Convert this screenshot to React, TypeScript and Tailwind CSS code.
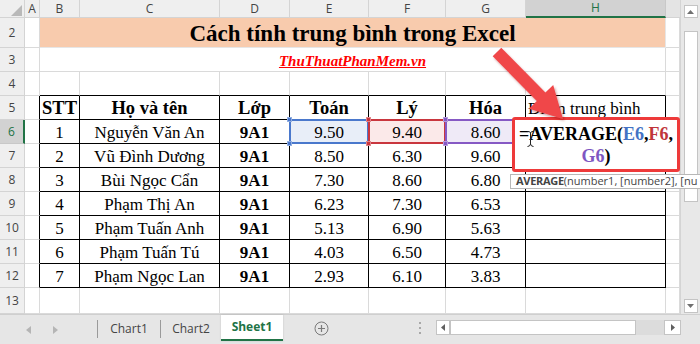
import React from "react";

const serif = "font-['Liberation_Serif',serif]";
const ui = "font-['Open_Sans','Noto_Sans',sans-serif]";

const G = "bg-white border-r border-b border-[#dadada]";
const AB = "bg-white border-r border-b border-r-black border-b-[#dadada]";
const TB = "bg-white border-r border-b border-r-[#dadada] border-b-black";
const CELL = `${serif} bg-white border-r border-b border-black flex items-end justify-center text-[17px] leading-[20px] text-black`;
const HEAD = `${serif} bg-white border-r border-b border-black flex items-end justify-center text-[18.5px] leading-[21px] font-bold text-black`;

const CH = `${ui} flex items-center justify-center bg-[#efefef] text-[12px] text-[#444] border-r border-b border-[#d4d4d4]`;
const CH_ACTIVE = `${ui} flex items-center justify-center bg-[#d2d2d2] text-[12px] text-[#217346] border-r border-r-[#c8c8c8] border-b-2 border-b-[#217346]`;

type Row = { stt: string; name: string; e: string; f: string; g: string };
const data: Row[] = [
  { stt: "1", name: "Nguyễn Văn An", e: "9.50", f: "9.40", g: "8.60" },
  { stt: "2", name: "Vũ Đình Dương", e: "8.50", f: "6.30", g: "9.60" },
  { stt: "3", name: "Bùi Ngọc Cẩn", e: "7.30", f: "8.60", g: "6.80" },
  { stt: "4", name: "Phạm Thị An", e: "6.23", f: "7.30", g: "6.53" },
  { stt: "5", name: "Phạm Tuấn Anh", e: "5.13", f: "6.90", g: "5.63" },
  { stt: "6", name: "Phạm Tuấn Tú", e: "4.03", f: "6.50", g: "4.73" },
  { stt: "7", name: "Phạm Ngọc Lan", e: "2.93", f: "6.10", g: "3.83" },
];

function RH({ n, active = false }: { n: number; active?: boolean }) {
  return (
    <div
      className={
        active
          ? `${ui} flex items-center justify-center bg-[#d2d2d2] text-[12px] text-[#217346] border-b border-b-[#c8c8c8] border-r-2 border-r-[#217346]`
          : `${ui} flex items-center justify-center bg-[#efefef] text-[12px] text-[#444] border-b border-r border-[#d4d4d4]`
      }
    >
      {n}
    </div>
  );
}

function Sel({ c }: { c: "blue" | "red" | "purple" }) {
  const box =
    c === "blue"
      ? "absolute left-[-1px] top-[-1px] right-[-1px] bottom-[-1px] border-2 border-[#4a78cc]"
      : c === "red"
      ? "absolute left-[-1px] top-[-1px] right-[-1px] bottom-[-1px] border-2 border-[#c9363e]"
      : "absolute left-[-1px] top-[-1px] right-[-1px] bottom-[-1px] border-2 border-[#8659c4]";
  const sq =
    c === "blue"
      ? "absolute w-[5px] h-[5px] bg-[#4a78cc] border border-white/40"
      : c === "red"
      ? "absolute w-[5px] h-[5px] bg-[#c9363e] border border-white/40"
      : "absolute w-[5px] h-[5px] bg-[#8659c4] border border-white/40";
  return (
    <>
      <div className={box} />
      <div className={`${sq} left-[-3px] top-[-3px]`} />
      <div className={`${sq} right-[-3px] top-[-3px]`} />
      <div className={`${sq} left-[-3px] bottom-[-3px]`} />
      <div className={`${sq} right-[-3px] bottom-[-3px]`} />
    </>
  );
}

export default function App() {
  return (
    <div className="relative w-[700px] h-[344px] overflow-hidden bg-white">
      <div className="flex h-[314px]">
        {/* sheet grid */}
        <div className="grid w-[680px] grid-cols-[25px_15px_40px_140px_70px_79px_77px_80px_140px_14px] grid-rows-[18px_30px_repeat(10,24px)_26px]">
          {/* column headers */}
          <div className="relative bg-[#efefef] border-r border-b border-[#d4d4d4]">
            <svg className="absolute left-0 top-0" width="25" height="18" viewBox="0 0 25 18">
              <polygon points="22,5 22,16 11,16" fill="#b9b9b9" />
            </svg>
          </div>
          <div className={CH}>A</div>
          <div className={CH}>B</div>
          <div className={CH}>C</div>
          <div className={CH}>D</div>
          <div className={CH}>E</div>
          <div className={CH}>F</div>
          <div className={CH}>G</div>
          <div className={CH_ACTIVE}>H</div>
          <div className="bg-[#e4e4e4] border-b border-[#d4d4d4]" />

          {/* row 2 */}
          <RH n={2} />
          <div className={G} />
          <div className={`col-span-7 bg-[#f8cbad] border-r border-b border-[#e6e6e6] flex items-end justify-center ${serif} font-bold text-[23px] leading-[26px] text-black`}>
            Cách tính trung bình trong Excel
          </div>
          <div className={G} />

          {/* row 3 */}
          <RH n={3} />
          <div className={G} />
          <div className={`col-span-7 bg-white border-b border-r border-[#dadada] flex items-end justify-center ${serif} font-bold italic underline text-[15px] leading-[20px] text-[#ff0000]`}>
            ThuThuatPhanMem.vn
          </div>
          <div className={G} />

          {/* row 4 */}
          <RH n={4} />
          <div className={G} />
          <div className={TB} />
          <div className={TB} />
          <div className={TB} />
          <div className={TB} />
          <div className={TB} />
          <div className={TB} />
          <div className={TB} />
          <div className={G} />

          {/* row 5 header */}
          <RH n={5} />
          <div className={AB} />
          <div className={HEAD}>STT</div>
          <div className={HEAD}>Họ và tên</div>
          <div className={HEAD}>Lớp</div>
          <div className={HEAD}>Toán</div>
          <div className={HEAD}>Lý</div>
          <div className={HEAD}>Hóa</div>
          <div className={`${serif} bg-white border-r border-b border-black flex items-end justify-start pl-[2px] text-[17px] leading-[20px] text-black whitespace-nowrap overflow-hidden`}>
            Điểm trung bình
          </div>
          <div className={G} />

          {/* data rows */}
          {data.map((r, i) => (
            <React.Fragment key={r.stt}>
              <RH n={6 + i} active={i === 0} />
              <div className={AB} />
              <div className={CELL}>{r.stt}</div>
              <div className={CELL}>{r.name}</div>
              <div className={`${CELL} font-bold`}>9A1</div>
              {i === 0 ? (
                <>
                  <div className={`relative ${serif} bg-[#e8eef8] border-r border-b border-black flex items-end justify-center text-[17px] leading-[20px] text-black`}>
                    {r.e}
                    <Sel c="blue" />
                  </div>
                  <div className={`relative ${serif} bg-[#fbe9e9] border-r border-b border-black flex items-end justify-center text-[17px] leading-[20px] text-black`}>
                    {r.f}
                    <Sel c="red" />
                  </div>
                  <div className={`relative ${serif} bg-[#efeaf7] border-r border-b border-black flex items-end justify-center text-[17px] leading-[20px] text-black`}>
                    {r.g}
                    <Sel c="purple" />
                  </div>
                </>
              ) : (
                <>
                  <div className={CELL}>{r.e}</div>
                  <div className={CELL}>{r.f}</div>
                  <div className={CELL}>{r.g}</div>
                </>
              )}
              <div className={CELL} />
              <div className={G} />
            </React.Fragment>
          ))}

          {/* row 13 */}
          <RH n={13} />
          <div className={G} />
          <div className={G} />
          <div className={G} />
          <div className={G} />
          <div className={G} />
          <div className={G} />
          <div className={G} />
          <div className={G} />
          <div className={G} />
        </div>

        {/* vertical scrollbar */}
        <div className="w-[20px] bg-[#e8e8e8] border-l border-[#d4d4d4] flex flex-col items-center pt-[5px] pb-[1px]">
          <div className="w-[14px] h-[13px] bg-white border border-[#c4c4c4] flex items-center justify-center">
            <svg width="7" height="4" viewBox="0 0 7 4">
              <polygon points="0,4 7,4 3.5,0" fill="#707070" />
            </svg>
          </div>
          <div className="mt-[13px] w-[14px] h-[171px] bg-white border border-[#c4c4c4]" />
          <div className="mt-auto w-[14px] h-[14px] bg-white border border-[#c4c4c4] flex items-center justify-center">
            <svg width="7" height="4" viewBox="0 0 7 4">
              <polygon points="0,0 7,0 3.5,4" fill="#707070" />
            </svg>
          </div>
        </div>
      </div>

      {/* sheet tabs bar */}
      <div className={`${ui} h-[30px] flex items-start bg-[#e6e6e6] border-t border-[#cfcfcf]`}>
        <div className="w-[97px] h-full flex items-center">
          <svg className="ml-[26px]" width="5" height="8" viewBox="0 0 5 8">
            <polygon points="5,0 5,8 0,4" fill="#b5b5b5" />
          </svg>
          <svg className="ml-[22px]" width="5" height="8" viewBox="0 0 5 8">
            <polygon points="0,0 0,8 5,4" fill="#b5b5b5" />
          </svg>
        </div>
        <div className="mt-[5px] w-px h-[18px] bg-[#9a9a9a]" />
        <div className="w-[62px] h-[26px] mt-[1px] flex items-center justify-center text-[12px] text-[#444]">Chart1</div>
        <div className="mt-[5px] w-px h-[18px] bg-[#9a9a9a]" />
        <div className="w-[60px] h-[26px] mt-[1px] flex items-center justify-center text-[12px] text-[#444]">Chart2</div>
        <div className="w-[62px] h-[26px] bg-white border-b-2 border-[#217346] flex items-center justify-center text-[12px] font-bold text-[#217346] shadow-[0_0_2px_rgba(0,0,0,0.15)]">
          Sheet1
        </div>
        <div className="ml-[31px] h-[26px] flex items-center">
          <svg width="15" height="15" viewBox="0 0 15 15">
            <circle cx="7.5" cy="7.5" r="6.5" fill="none" stroke="#7a7a7a" strokeWidth="1" />
            <path d="M7.5 4 V11 M4 7.5 H11" stroke="#7a7a7a" strokeWidth="1.2" />
          </svg>
        </div>
        <div className="ml-[88px] h-[26px] flex items-center">
          <svg width="6" height="12" viewBox="0 0 6 12">
            <rect x="2" y="0" width="2" height="2" fill="#a8a8a8" />
            <rect x="2" y="5" width="2" height="2" fill="#a8a8a8" />
            <rect x="2" y="10" width="2" height="2" fill="#a8a8a8" />
          </svg>
        </div>
        <div className="ml-[13px] mt-[5px] flex h-[15px]">
          <div className="w-[14px] h-[15px] bg-white border border-[#c4c4c4] flex items-center justify-center">
            <svg width="4" height="7" viewBox="0 0 4 7">
              <polygon points="4,0 4,7 0,3.5" fill="#606060" />
            </svg>
          </div>
          <div className="w-[186px] h-[15px] bg-white border border-[#c4c4c4]" />
          <div className="w-[28px] h-[15px] bg-[#dcdcdc]" />
          <div className="w-[17px] h-[15px] bg-white border border-[#c4c4c4] flex items-center justify-center">
            <svg width="4" height="7" viewBox="0 0 4 7">
              <polygon points="0,0 0,7 4,3.5" fill="#606060" />
            </svg>
          </div>
        </div>
      </div>

      {/* formula edit box (annotated) */}
      <div className={`absolute left-[512px] top-[117px] w-[168px] h-[55px] bg-white border-[3px] border-[#ee3a3a] rounded-[3px] pt-[3px] text-center whitespace-nowrap ${serif} font-bold text-[18px] leading-[22px] text-black`}>
        <div>
          =AVERAGE(<span className="text-[#4472c4]">E6</span>,<span className="text-[#c0353b]">F6</span>,
        </div>
        <div>
          <span className="text-[#7e57c2]">G6</span>)
        </div>
      </div>

      {/* tooltip (runs past the window edge, as in the reference) */}
      <div className={`absolute left-[510px] top-[174px] w-[200px] h-[15px] pl-[5px] flex items-center whitespace-nowrap bg-white border border-[#b8b8b8] ${ui} text-[11px] text-[#444]`}>
        <span className="font-bold tracking-[-0.3px]">AVERAGE</span>(number1, [number2], [nu
      </div>

      {/* arrow + cursor */}
      <svg className="absolute left-0 top-0 pointer-events-none" width="700" height="344" viewBox="0 0 700 344">
        <defs>
          <filter id="sh" x="-20%" y="-20%" width="140%" height="140%">
            <feDropShadow dx="1.5" dy="2" stdDeviation="1.2" floodColor="#7a0000" floodOpacity="0.35" />
          </filter>
        </defs>
        <polygon
          points="492.7,56.2 501.3,47.8 545.4,92.6 553.2,84.9 563,119 529,108.7 536.8,101"
          fill="#f0474a"
          filter="url(#sh)"
        />
        <path d="M527.5 131.5 Q530 131 530.5 133 V144 Q530 146.5 527.5 146.5 M533.5 131.5 Q531 131 530.5 133 M530.5 144 Q531 146.5 533.5 146.5" stroke="#222" strokeWidth="1" fill="none" />
      </svg>
    </div>
  );
}
